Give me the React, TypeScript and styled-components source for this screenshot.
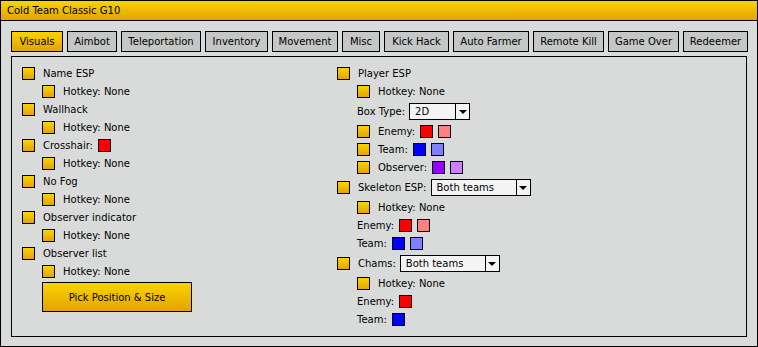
import React from "react";
import styled, { createGlobalStyle } from "styled-components";

const GlobalStyle = createGlobalStyle`
  html, body {
    margin: 0;
    padding: 0;
    background: #d9dbda;
  }
  body {
    font-family: "DejaVu Sans", Verdana, sans-serif;
    font-size: 10px;
    color: #000;
  }
`;

const gold = "linear-gradient(to bottom, #f8d400 0%, #e4a300 100%)";

const Window = styled.div`
  width: 758px;
  height: 347px;
  box-sizing: border-box;
  border: 1px solid #000;
  background: #d9dbda;
  display: flex;
  flex-direction: column;
`;

const TitleBar = styled.div`
  height: 19px;
  border-bottom: 1px solid #000;
  background: ${gold};
  display: flex;
  align-items: center;
  padding-left: 6px;
`;

const Body = styled.div`
  flex: 1;
  display: flex;
  flex-direction: column;
  padding: 10px 10px 11px 10px;
  gap: 4px;
  min-height: 0;
`;

const Tabs = styled.div`
  display: flex;
  gap: 4px;
`;

const Tab = styled.div<{ $active?: boolean; $width: number }>`
  width: ${(p) => p.$width}px;
  height: 21px;
  box-sizing: border-box;
  border: 1px solid #000;
  background: ${(p) => (p.$active ? gold : "#c5c7c6")};
  display: flex;
  align-items: center;
  justify-content: center;
  white-space: nowrap;
  flex: none;
`;

const Panel = styled.div`
  flex: 1;
  border: 1px solid #000;
  display: flex;
  padding: 10px;
`;

const Column = styled.div<{ $width?: number }>`
  display: flex;
  flex-direction: column;
  gap: 5px;
  width: ${(p) => (p.$width ? `${p.$width}px` : "auto")};
`;

const Row = styled.div<{ $indent?: boolean; $tall?: boolean }>`
  display: flex;
  align-items: center;
  height: ${(p) => (p.$tall ? 17 : 13)}px;
  padding-left: ${(p) => (p.$indent ? 20 : 0)}px;
  white-space: nowrap;
`;

const Check = styled.span`
  width: 11px;
  height: 11px;
  border: 1px solid #000;
  background: ${gold};
  margin-right: 8px;
  flex: none;
`;

const Swatch = styled.span<{ $color: string }>`
  width: 11px;
  height: 11px;
  border: 1px solid #000;
  background: ${(p) => p.$color};
  margin-left: 5px;
  flex: none;
`;

const Select = styled.div<{ $width: number }>`
  width: ${(p) => p.$width}px;
  height: 17px;
  box-sizing: border-box;
  border: 1px solid #000;
  background: #f4f4f4;
  margin-left: 4px;
  display: flex;
  align-items: center;
`;

const SelectValue = styled.span`
  flex: 1;
  padding-left: 5px;
`;

const SelectArrow = styled.span`
  width: 13px;
  height: 100%;
  border-left: 1px solid #000;
  display: flex;
  align-items: center;
  justify-content: center;
  &::after {
    content: "";
    border-left: 4px solid transparent;
    border-right: 4px solid transparent;
    border-top: 4px solid #000;
  }
`;

const ActionButton = styled.div`
  margin: -1px 0 0 20px;
  width: 148px;
  height: 28px;
  border: 1px solid #000;
  background: ${gold};
  display: flex;
  align-items: center;
  justify-content: center;
`;

// widths read off the screenshot
const tabs = [
  { label: "Visuals", width: 52 },
  { label: "Aimbot", width: 50 },
  { label: "Teleportation", width: 80 },
  { label: "Inventory", width: 63 },
  { label: "Movement", width: 66 },
  { label: "Misc", width: 38 },
  { label: "Kick Hack", width: 65 },
  { label: "Auto Farmer", width: 76 },
  { label: "Remote Kill", width: 71 },
  { label: "Game Over", width: 71 },
  { label: "Redeemer", width: 65 },
];

const Hotkey = () => (
  <Row $indent>
    <Check />
    Hotkey: None
  </Row>
);

const Dropdown = ({ value, width }: { value: string; width: number }) => (
  <Select $width={width}>
    <SelectValue>{value}</SelectValue>
    <SelectArrow />
  </Select>
);

export default function App() {
  return (
    <>
      <GlobalStyle />
      <Window>
        <TitleBar>Cold Team Classic G10</TitleBar>
        <Body>
          <Tabs>
            {tabs.map((t, i) => (
              <Tab key={t.label} $active={i === 0} $width={t.width}>
                {t.label}
              </Tab>
            ))}
          </Tabs>
          <Panel>
            <Column $width={315}>
              <Row>
                <Check />
                Name ESP
              </Row>
              <Hotkey />
              <Row>
                <Check />
                Wallhack
              </Row>
              <Hotkey />
              <Row>
                <Check />
                Crosshair:
                <Swatch $color="#ff0000" />
              </Row>
              <Hotkey />
              <Row>
                <Check />
                No Fog
              </Row>
              <Hotkey />
              <Row>
                <Check />
                Observer indicator
              </Row>
              <Hotkey />
              <Row>
                <Check />
                Observer list
              </Row>
              <Hotkey />
              <ActionButton>Pick Position &amp; Size</ActionButton>
            </Column>
            <Column>
              <Row>
                <Check />
                Player ESP
              </Row>
              <Hotkey />
              <Row $indent $tall>
                Box Type:
                <Dropdown value="2D" width={61} />
              </Row>
              <Row $indent>
                <Check />
                Enemy:
                <Swatch $color="#ff0000" />
                <Swatch $color="#ff8080" />
              </Row>
              <Row $indent>
                <Check />
                Team:
                <Swatch $color="#0000ff" />
                <Swatch $color="#8080ff" />
              </Row>
              <Row $indent>
                <Check />
                Observer:
                <Swatch $color="#9900ff" />
                <Swatch $color="#cc80ff" />
              </Row>
              <Row $tall>
                <Check />
                Skeleton ESP:
                <Dropdown value="Both teams" width={100} />
              </Row>
              <Hotkey />
              <Row $indent>
                Enemy:
                <Swatch $color="#ff0000" />
                <Swatch $color="#ff8080" />
              </Row>
              <Row $indent>
                Team:
                <Swatch $color="#0000ff" />
                <Swatch $color="#8080ff" />
              </Row>
              <Row $tall>
                <Check />
                Chams:
                <Dropdown value="Both teams" width={100} />
              </Row>
              <Hotkey />
              <Row $indent>
                Enemy:
                <Swatch $color="#ff0000" />
              </Row>
              <Row $indent>
                Team:
                <Swatch $color="#0000ff" />
              </Row>
            </Column>
          </Panel>
        </Body>
      </Window>
    </>
  );
}
